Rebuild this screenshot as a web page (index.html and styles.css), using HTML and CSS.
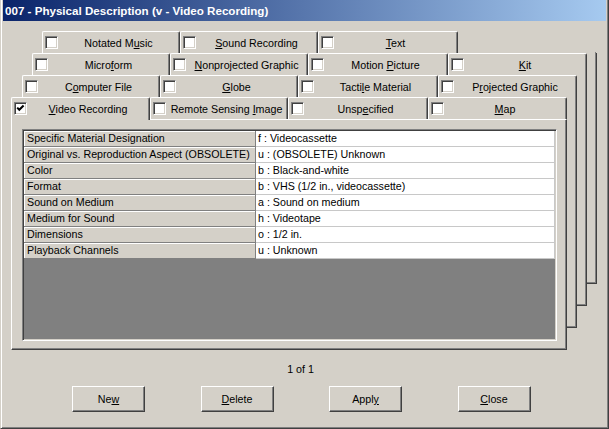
FILE: index.html
```html
<!DOCTYPE html>
<html>
<head>
<meta charset="utf-8">
<title>007 - Physical Description</title>
<link rel="stylesheet" href="styles.css">
</head>
<body>
<div class="window">
  <div class="titlebar">007 - Physical Description (v - Video Recording)</div>
  <div class="deck">
    <div class="tabrow row1">
      <div class="tab"><span class="cb"></span><span class="lbl">Notated M<u>u</u>sic</span></div>
      <div class="tab"><span class="cb"></span><span class="lbl"><u>S</u>ound Recording</span></div>
      <div class="tab"><span class="cb"></span><span class="lbl"><u>T</u>ext</span></div>
    </div>
    <div class="tabrow row2">
      <div class="tab"><span class="cb"></span><span class="lbl">Micro<u>f</u>orm</span></div>
      <div class="tab"><span class="cb"></span><span class="lbl"><u>N</u>onprojected Graphic</span></div>
      <div class="tab"><span class="cb"></span><span class="lbl">Motion <u>P</u>icture</span></div>
      <div class="tab"><span class="cb"></span><span class="lbl"><u>K</u>it</span></div>
    </div>
    <div class="tabrow row3">
      <div class="tab"><span class="cb"></span><span class="lbl">C<u>o</u>mputer File</span></div>
      <div class="tab"><span class="cb"></span><span class="lbl"><u>G</u>lobe</span></div>
      <div class="tab"><span class="cb"></span><span class="lbl">Tacti<u>l</u>e Material</span></div>
      <div class="tab"><span class="cb"></span><span class="lbl">P<u>r</u>ojected Graphic</span></div>
    </div>
    <div class="tabrow row4">
      <div class="tab selected"><span class="cb"><svg class="check" viewBox="0 0 11 11" width="11" height="11"><polyline points="2.2,4.6 4.3,6.8 8.6,2.5" fill="none" stroke="#000" stroke-width="2"/></svg></span><span class="lbl"><u>V</u>ideo Recording</span></div>
      <div class="tab"><span class="cb"></span><span class="lbl">Remote Sensing <u>I</u>mage</span></div>
      <div class="tab"><span class="cb"></span><span class="lbl">Unsp<u>e</u>cified</span></div>
      <div class="tab"><span class="cb"></span><span class="lbl"><u>M</u>ap</span></div>
    </div>
    <div class="page">
      <div class="grid">
        <div class="row"><div class="key">Specific Material Designation</div><div class="val">f : Videocassette</div></div>
        <div class="row"><div class="key">Original vs. Reproduction Aspect (OBSOLETE)</div><div class="val">u : (OBSOLETE) Unknown</div></div>
        <div class="row"><div class="key">Color</div><div class="val">b : Black-and-white</div></div>
        <div class="row"><div class="key">Format</div><div class="val">b : VHS (1/2 in., videocassette)</div></div>
        <div class="row"><div class="key">Sound on Medium</div><div class="val">a : Sound on medium</div></div>
        <div class="row"><div class="key">Medium for Sound</div><div class="val">h : Videotape</div></div>
        <div class="row"><div class="key">Dimensions</div><div class="val">o : 1/2 in.</div></div>
        <div class="row"><div class="key">Playback Channels</div><div class="val">u : Unknown</div></div>
      </div>
    </div>
  </div>
  <div class="counter">1 of 1</div>
  <div class="buttons">
    <button class="btn">Ne<u>w</u></button>
    <button class="btn"><u>D</u>elete</button>
    <button class="btn">Appl<u>y</u></button>
    <button class="btn"><u>C</u>lose</button>
  </div>
</div>
</body>
</html>
```
FILE: styles.css
```css
* { box-sizing: border-box; }
html, body { margin: 0; padding: 0; }
body {
  font-family: "Liberation Sans", Arial, sans-serif;
  font-size: 10.7px;
  color: #000;
  background: #d4d0c8;
}
u { text-decoration: underline; text-underline-offset: 1px; }

.window {
  width: 609px;
  height: 429px;
  background: #d4d0c8;
  border-left: 1px solid #d4d0c8;
  border-right: 1px solid #404040;
  border-bottom: 1px solid #404040;
  padding: 0 2px 2px 2px;
  box-shadow: inset 1px 0 0 #fff, inset -1px -1px 0 #808080;
  display: flex;
  flex-direction: column;
}

.titlebar {
  height: 21px;
  line-height: 22px;
  padding-left: 2px;
  background: linear-gradient(to right, #0a246a, #a6caf0);
  color: #fff;
  font-weight: bold;
  font-size: 11.6px;
  white-space: nowrap;
}

.deck { margin-top: 10px; }

.tabrow {
  display: flex;
  height: 22px;
  position: relative;
  z-index: 1;
}
.row1 { margin-left: 39px; }
.row2 { margin-left: 29px; }
.row3 { margin-left: 19px; }
.row4 { margin-left: 8px; }

.tab {
  flex: none;
  width: 138px;
  height: 22px;
  display: flex;
  align-items: center;
  padding-left: 2px;
  background: #d4d0c8;
  border-top: 1px solid #fff;
  border-left: 1px solid #fff;
  border-right: 1px solid #404040;
  border-radius: 2px 2px 0 0;
  box-shadow: inset -1px 0 0 #808080;
  white-space: nowrap;
}
.tab:nth-child(3) { width: 140px; }
.tab:nth-child(4) { width: 139px; }
.row4 .tab:nth-child(1) { width: 139px; }
.tab.selected {
  height: 23px;
  margin-bottom: -1px;
  padding-bottom: 1px;
  position: relative;
  z-index: 2;
}

.lbl { flex: 1; text-align: center; }

.cb {
  flex: none;
  width: 13px;
  height: 13px;
  background: #fff;
  border: 1px solid;
  border-color: #808080 #fff #fff #808080;
  box-shadow: inset 1px 1px 0 #404040, inset -1px -1px 0 #d4d0c8;
}
.check { display: block; }

.page {
  margin-left: 8px;
  width: 556px;
  height: 231px;
  padding: 9px 9px 8px 10px;
  background: #d4d0c8;
  border-top: 1px solid #fff;
  border-left: 1px solid #fff;
  border-right: 1px solid #404040;
  border-bottom: 1px solid #404040;
  box-shadow:
    inset -1px -1px 0 #808080,
    8px -24px 0 0 #d4d0c8,
    9px -23px 0 0 #808080,
    10px -22px 0 0 #404040,
    18px -46px 0 0 #d4d0c8,
    19px -45px 0 0 #808080,
    20px -44px 0 0 #404040,
    28px -68px 0 0 #d4d0c8,
    29px -67px 0 0 #808080,
    30px -66px 0 0 #404040;
}

.grid {
  width: 535px;
  height: 212px;
  padding: 1px;
  background: #808080;
  border: 1px solid;
  border-color: #808080 #fff #fff #808080;
  box-shadow: inset 1px 1px 0 #404040, inset -1px -1px 0 #d4d0c8;
}
.row {
  display: flex;
  height: 16px;
}
.key {
  width: 232px;
  flex: none;
  padding-left: 3px;
  line-height: 15px;
  background: #d4d0c8;
  border-right: 1px solid #808080;
  border-bottom: 1px solid #808080;
  box-shadow: inset 1px 1px 0 #fff;
  white-space: nowrap;
}
.val {
  flex: 1;
  padding-left: 2px;
  line-height: 15px;
  background: #fff;
  border-right: 1px solid #c8c8c8;
  border-bottom: 1px solid #c8c8c8;
  white-space: nowrap;
}

.counter {
  margin-top: 12px;
  padding-right: 8px;
  line-height: 14px;
  text-align: center;
}

.buttons {
  margin-top: 10px;
  padding-left: 69px;
  display: flex;
  gap: 55.5px;
}
.btn {
  width: 73px;
  height: 26px;
  padding: 0;
  font-family: inherit;
  font-size: 10.7px;
  color: #000;
  background: #d4d0c8;
  border: 1px solid;
  border-color: #fff #404040 #404040 #fff;
  border-radius: 0;
  box-shadow: inset -1px -1px 0 #808080;
}
```
